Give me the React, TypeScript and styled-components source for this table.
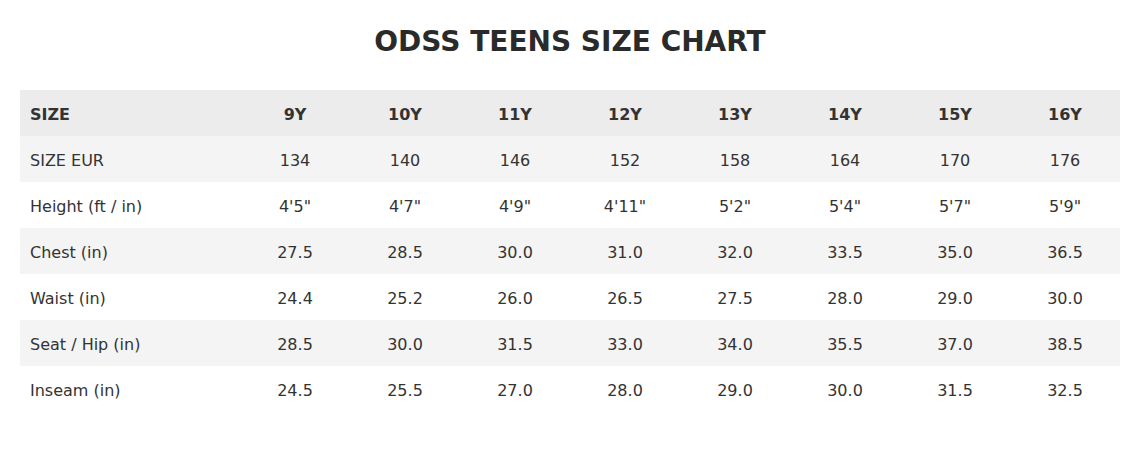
import React from "react";
import styled, { createGlobalStyle } from "styled-components";

const Global = createGlobalStyle`
  html, body { margin: 0; padding: 0; background: #ffffff; }
  body { font-family: "DejaVu Sans", "Liberation Sans", sans-serif; color: #333333; }
`;

const Page = styled.div`
  padding: 20px 20px 0 20px;
`;

const Title = styled.h1`
  margin: 0 0 24px 0;
  height: 46px;
  line-height: 44px;
  text-align: center;
  font-size: 28px;
  font-weight: bold;
  color: #2a2a2a;
`;

const Table = styled.table`
  width: 1100px;
  border-collapse: collapse;
  table-layout: fixed;
  font-size: 16px;
`;

const Row = styled.tr<{ $bg: string }>`
  background: ${(p) => p.$bg};
  height: 46px;
`;

const Cell = styled.td<{ $first?: boolean; $head?: boolean }>`
  padding: 2px 10px 0 10px;
  text-align: ${(p) => (p.$first ? "left" : "center")};
  font-weight: ${(p) => (p.$head ? "bold" : "normal")};
  color: #333333;
  white-space: nowrap;
`;

const Col = styled.col<{ $w: number }>`
  width: ${(p) => p.$w}px;
`;

const head = ["SIZE", "9Y", "10Y", "11Y", "12Y", "13Y", "14Y", "15Y", "16Y"];
const rows: string[][] = [
  ["SIZE EUR", "134", "140", "146", "152", "158", "164", "170", "176"],
  ["Height (ft / in)", "4'5\"", "4'7\"", "4'9\"", "4'11\"", "5'2\"", "5'4\"", "5'7\"", "5'9\""],
  ["Chest (in)", "27.5", "28.5", "30.0", "31.0", "32.0", "33.5", "35.0", "36.5"],
  ["Waist (in)", "24.4", "25.2", "26.0", "26.5", "27.5", "28.0", "29.0", "30.0"],
  ["Seat / Hip (in)", "28.5", "30.0", "31.5", "33.0", "34.0", "35.5", "37.0", "38.5"],
  ["Inseam (in)", "24.5", "25.5", "27.0", "28.0", "29.0", "30.0", "31.5", "32.5"],
];

export default function App() {
  return (
    <Page>
      <Global />
      <Title>ODSS TEENS SIZE CHART</Title>
      <Table>
        <colgroup>
          <Col $w={220} />
          {head.slice(1).map((h) => (
            <Col key={h} $w={110} />
          ))}
        </colgroup>
        <thead>
          <Row $bg="#ececec">
            {head.map((h, i) => (
              <Cell as="th" key={h} $first={i === 0} $head>
                {h}
              </Cell>
            ))}
          </Row>
        </thead>
        <tbody>
          {rows.map((r, ri) => (
            <Row key={r[0]} $bg={ri % 2 === 0 ? "#f4f4f4" : "#ffffff"}>
              {r.map((c, i) => (
                <Cell key={i} $first={i === 0}>
                  {c}
                </Cell>
              ))}
            </Row>
          ))}
        </tbody>
      </Table>
    </Page>
  );
}
